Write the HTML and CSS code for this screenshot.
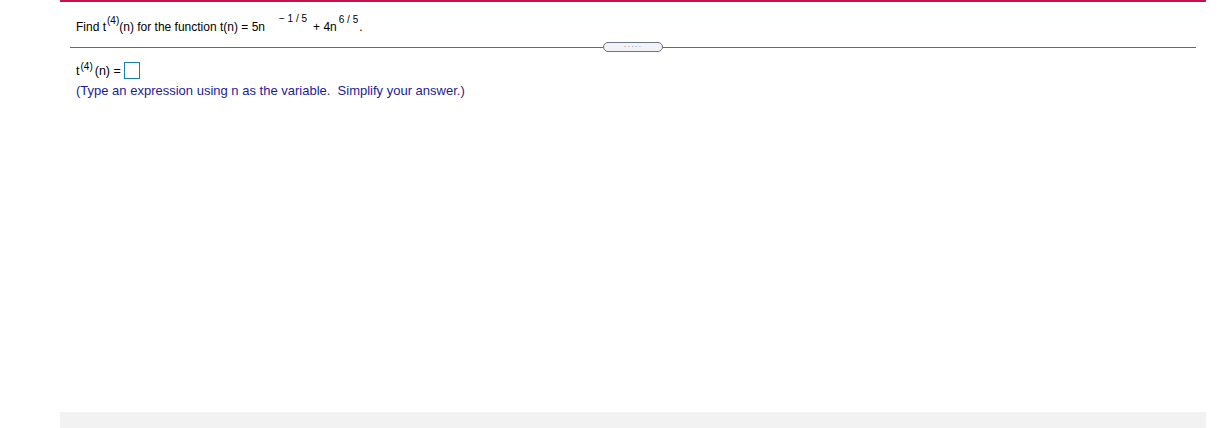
FILE: index.html
```html
<!DOCTYPE html>
<html lang="en">
<head>
    <meta charset="UTF-8">
    <title>Question</title>
    <link rel="stylesheet" href="styles.css">
</head>
<body>
    <div class="page">
        <div class="question">
            <div class="stem">
                Find t<sup class="exp">(4)</sup>(n) for the function t(n) = 5n<sup class="exp exp-neg">&minus; 1 / 5</sup>+ 4n<sup class="exp exp-pos">6 / 5</sup>.
            </div>
            <div class="divider">
                <button class="more" type="button">&middot;&middot;&middot;&middot;&middot;</button>
            </div>
            <div class="answer">
                <div class="answer-line">
                    t<sup class="exp">(4)</sup>(n) = <span class="answer-box"></span>
                </div>
                <div class="hint">(Type an expression using n as the variable.&nbsp; Simplify your answer.)</div>
            </div>
        </div>
        <div class="footer"></div>
    </div>
</body>
</html>
```
FILE: styles.css
```css
body {
    margin: 0;
    background: #fff;
    font-family: "Liberation Sans", Arial, sans-serif;
    font-size: 12px;
    color: #000;
}
.page {
    margin: 0 18px 0 60px;
    height: 428px;
    display: flex;
    flex-direction: column;
    border-top: 2px solid #c4124c;
    box-sizing: border-box;
}
.question {
    flex: 1;
}
.stem {
    padding: 17px 0 0 16px;
    line-height: 16px;
    height: 18px;
}
.exp {
    font-size: 10px;
    position: relative;
    vertical-align: baseline;
    top: -7px;
    margin-left: 1px;
}
.exp-neg {
    top: -9px;
    margin: 0 6px 0 14px;
}
.exp-pos {
    top: -8px;
    margin: 0 1px 0 2px;
}
.divider {
    margin: 5px 10px 0 10px;
    border-bottom: 1px solid #5f6b7a;
    height: 5px;
    position: relative;
}
.more {
    position: absolute;
    left: 533px;
    top: 0;
    width: 60px;
    height: 10px;
    padding: 0;
    border: 1px solid #6b7585;
    border-radius: 5px;
    background: #f2f3f6;
    color: #5f6b7a;
    font-size: 8px;
    line-height: 6px;
    letter-spacing: 1px;
    font-family: "Liberation Sans", Arial, sans-serif;
    cursor: pointer;
}
.answer {
    padding: 10px 0 0 16px;
}
.answer-line {
    display: flex;
    align-items: flex-end;
    height: 20px;
    font-size: 12.5px;
}
.answer-line .exp {
    top: -6px;
    margin-right: 2px;
}
.answer-box {
    display: inline-block;
    width: 14px;
    height: 15px;
    border: 1px solid #1a7fa8;
    margin-left: 3px;
    margin-bottom: -1px;
}
.hint {
    color: #1c1c96;
    font-size: 13px;
    margin-top: 5px;
    line-height: 16px;
}
.footer {
    height: 16px;
    background: #f2f2f2;
}
```
